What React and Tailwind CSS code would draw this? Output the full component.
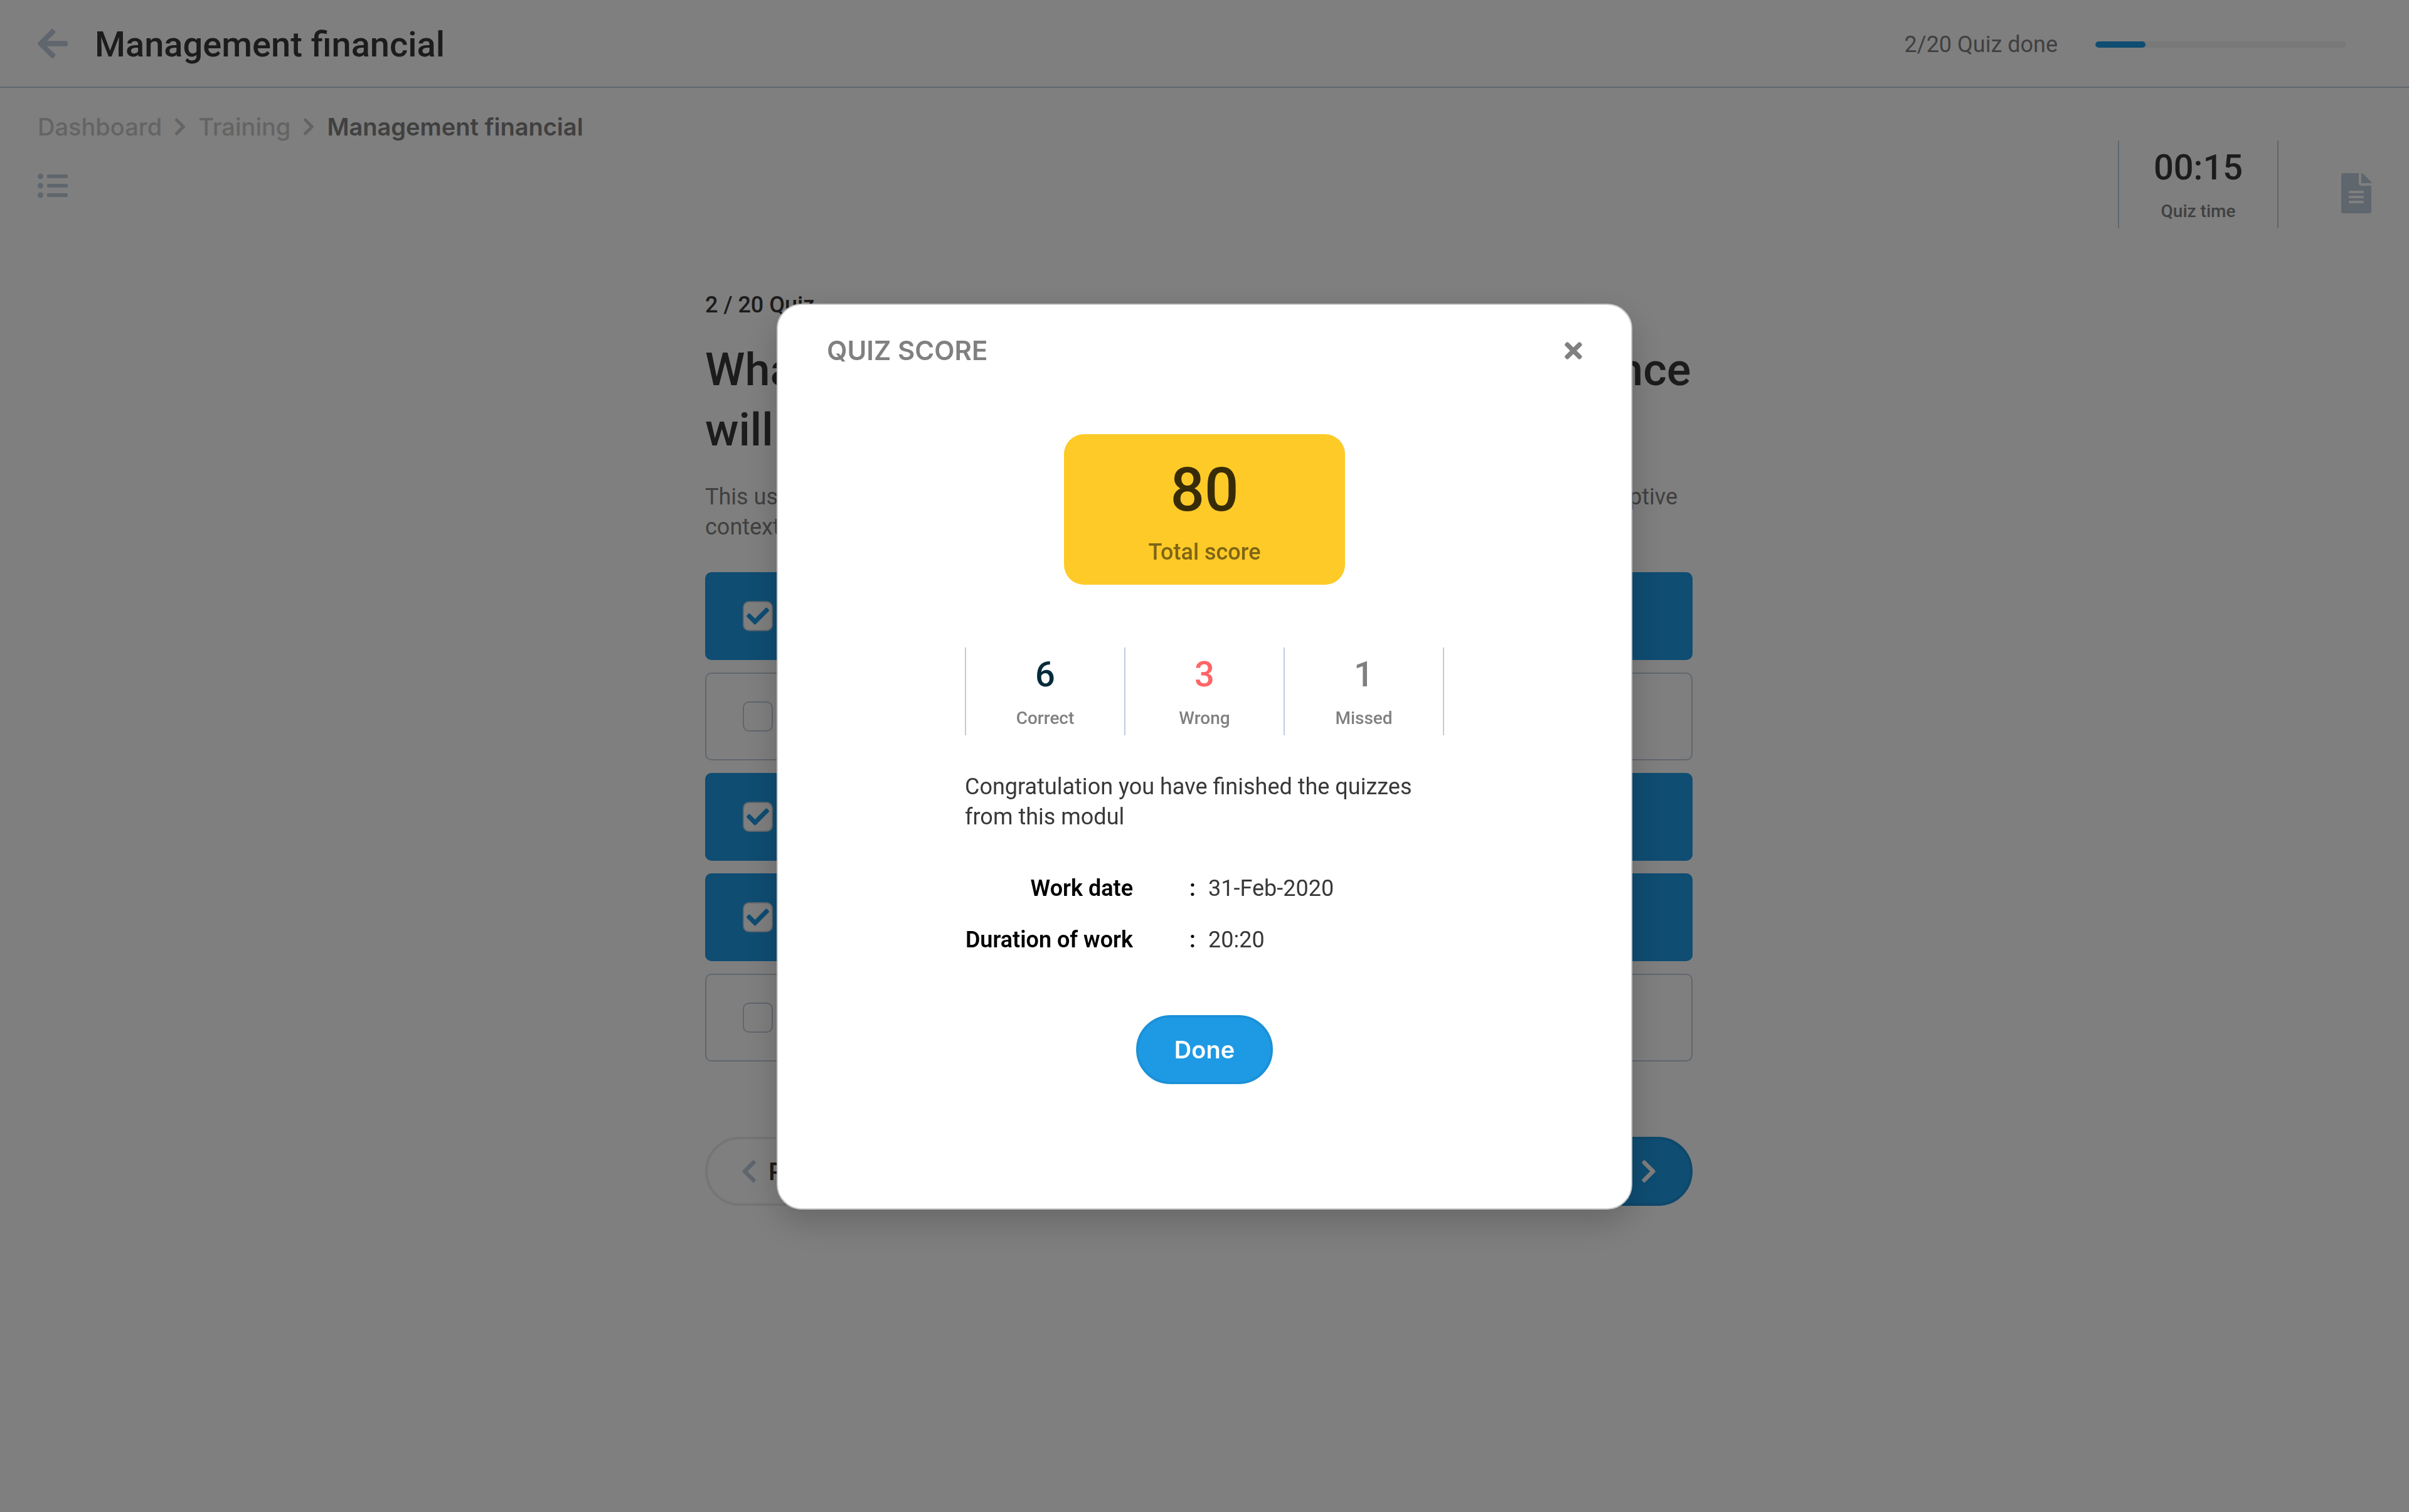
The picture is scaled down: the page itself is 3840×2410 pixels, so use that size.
import {
  FaArrowLeft,
  FaCheck,
  FaChevronLeft,
  FaChevronRight,
  FaFileAlt,
  FaListUl,
  FaTimes,
} from "react-icons/fa";

const options = [
  { id: "a", label: "Monthly cash flow report", checked: true },
  { id: "b", label: "Annual budget plan", checked: false },
  { id: "c", label: "Investment portfolio", checked: true },
  { id: "d", label: "Operational expenses", checked: true },
  { id: "e", label: "None of the above", checked: false },
];

const results = [
  { label: "Correct", value: 6, color: "text-[#062b3a]" },
  { label: "Wrong", value: 3, color: "text-[#ff6565]" },
  { label: "Missed", value: 1, color: "text-[#808080]" },
];

const details = [
  { term: "Work date", value: "31-Feb-2020" },
  { term: "Duration of work", value: "20:20" },
];

function Header() {
  return (
    <header className="flex h-[140px] items-center justify-between border-b-2 border-[#c0ccda] pr-[100px] pl-[60px]">
      <div className="flex items-center gap-[43px]">
        <button type="button" aria-label="Back" className="text-[#c0ccda]">
          <FaArrowLeft className="h-[55px] w-12" />
        </button>
        <h1 className="pt-1 text-[56px] leading-[64px] font-medium text-[#383838]">
          Management financial
        </h1>
      </div>
      <div className="flex items-center gap-[60px] pt-1">
        <span className="text-[36px] leading-[48px] text-[#808080]">2/20 Quiz done</span>
        <div
          role="progressbar"
          aria-label="Quiz progress"
          aria-valuemin={0}
          aria-valuemax={20}
          aria-valuenow={2}
          className="h-[10px] w-[400px] overflow-hidden rounded-[5px] bg-[#f0f0f0]"
        >
          <div className="h-full w-1/5 rounded-[5px] bg-[#1e9ae5]" />
        </div>
      </div>
    </header>
  );
}

function Breadcrumb() {
  return (
    <nav aria-label="Breadcrumb">
      <ol className="flex items-center gap-[19px] font-['Inter',sans-serif] text-[38px] leading-[48px] font-medium text-[#c8c8c8]">
        <li>
          <a href="#dashboard">Dashboard</a>
        </li>
        <li aria-hidden="true">
          <FaChevronRight className="h-8 w-5" />
        </li>
        <li>
          <a href="#training">Training</a>
        </li>
        <li aria-hidden="true">
          <FaChevronRight className="h-8 w-5" />
        </li>
        <li aria-current="page" className="font-semibold text-[#808080]">
          Management financial
        </li>
      </ol>
    </nav>
  );
}

function Stat({ value, label, color }) {
  return (
    <div className="flex h-[140px] flex-1 flex-col items-center pt-[11px]">
      <span className={`text-[56px] leading-[64px] font-medium ${color}`}>{value}</span>
      <span className="mt-[22px] text-[28px] leading-8 font-medium text-[#808080]">{label}</span>
    </div>
  );
}

function Toolbar() {
  return (
    <div className="flex items-start justify-between px-[60px]">
      <div className="flex flex-col items-start gap-[46px] pt-[38px]">
        <Breadcrumb />
        <button type="button" aria-label="Question list" className="text-[#c0ccda]">
          <FaListUl className="h-12 w-12" />
        </button>
      </div>
      <div className="flex items-start gap-[100px] pt-[84px]">
        <div className="flex w-[256px] border-x-2 border-[#c0ccda]">
          <Stat value="00:15" label="Quiz time" color="text-[#383838]" />
        </div>
        <button type="button" aria-label="Notes" className="pt-[52px] text-[#c0ccda]">
          <FaFileAlt className="h-16 w-12" />
        </button>
      </div>
    </div>
  );
}

function Option({ id, label, checked }) {
  return (
    <label
      htmlFor={id}
      className={`flex h-[140px] items-center gap-6 rounded-[10px] px-[58px] text-[36px] leading-[48px] ${
        checked
          ? "border-2 border-[#1e9ae5] bg-[#1e9ae5] text-white"
          : "border-2 border-[#c0ccda] bg-white text-[#383838]"
      }`}
    >
      <span className="grid place-items-center">
        <input
          id={id}
          type="checkbox"
          defaultChecked={checked}
          className="peer col-start-1 row-start-1 h-12 w-12 appearance-none rounded-[10px] border-2 border-[#c0ccda] bg-white"
        />
        <FaCheck className="pointer-events-none col-start-1 row-start-1 h-9 w-9 text-[#1e9ae5] opacity-0 peer-checked:opacity-100" />
      </span>
      {label}
    </label>
  );
}

function Question() {
  return (
    <main className="px-[60px] pt-[98px] pb-20">
      <div className="mx-auto flex max-w-[1592px] flex-col pr-[18px]">
        <p className="text-[36px] leading-[48px] font-medium text-[#383838]">2 / 20 Quiz</p>
        <h2 className="mt-8 text-[72px] leading-[96px] font-medium text-[#383838]">
          What is the best example of how the new finance
          <br />
          will be managed?
        </h2>
        <p className="mt-[34px] text-[36px] leading-[48px] text-[#808080]">
          This used to explain all of the financial words that are described in the longer and very descriptive
          <br />
          context
        </p>
        <div className="mt-12 flex flex-col gap-5">
          {options.map((option) => (
            <Option key={option.id} {...option} />
          ))}
        </div>
        <div className="mt-[120px] flex justify-between font-['Inter',sans-serif] text-[38px] leading-[48px] font-semibold">
          <button
            type="button"
            className="flex h-[110px] items-center gap-[18px] rounded-full border-4 border-[#ebebeb] px-[53px] text-[#383838]"
          >
            <FaChevronLeft className="h-[42px] w-[26px] text-[#c0ccda]" />
            Previous
          </button>
          <button
            type="button"
            className="flex h-[110px] items-center gap-[18px] rounded-full border-4 border-[#1b91d8] bg-[#1e9ae5] px-[53px] text-white"
          >
            Next
            <FaChevronRight className="h-[42px] w-[26px]" />
          </button>
        </div>
      </div>
    </main>
  );
}

function ScoreDialog() {
  return (
    <div className="fixed inset-0 grid place-items-center overflow-auto bg-black/50 pt-0.5">
      <section
        role="dialog"
        aria-modal="true"
        aria-labelledby="score-title"
        className="w-full max-w-[1364px] rounded-[40px] border-2 border-[#c8c8c8] bg-white px-[78px] pt-[49px] pb-[198px] shadow-[0_20px_56px_rgba(0,0,0,0.2)]"
      >
        <div className="flex items-center justify-between text-[#808080]">
          <h2
            id="score-title"
            className="font-['Inter',sans-serif] text-[42px] leading-[48px] font-semibold"
          >
            QUIZ SCORE
          </h2>
          <button type="button" aria-label="Close">
            <FaTimes className="h-10 w-7" />
          </button>
        </div>

        <div className="mx-auto mt-[109px] flex h-[240px] w-[448px] flex-col items-center rounded-[32px] bg-[#fdca28] pt-8">
          <span className="text-[96px] leading-[114px] font-medium text-black/78">80</span>
          <span className="mt-[18px] text-[36px] leading-[48px] font-medium text-black/50">
            Total score
          </span>
        </div>

        <div className="mx-auto mt-[100px] max-w-[764px]">
          <div className="flex divide-x-2 divide-[#c0ccda] border-x-2 border-[#c0ccda]">
            {results.map((result) => (
              <Stat key={result.label} {...result} />
            ))}
          </div>

          <p className="mt-[58px] text-[36px] leading-[48px] text-[#383838]">
            Congratulation you have finished the quizzes from this modul
          </p>

          <dl className="mt-[66px] flex flex-col gap-[34px] text-[36px] leading-[48px]">
            {details.map(({ term, value }) => (
              <div key={term} className="grid grid-cols-[268px_1fr] gap-x-[90px]">
                <dt className="text-right font-semibold text-black">{term}</dt>
                <dd className="flex text-[#383838]">
                  <span aria-hidden="true" className="w-[30px] font-semibold text-black">
                    :
                  </span>
                  {value}
                </dd>
              </div>
            ))}
          </dl>
        </div>

        <button
          type="button"
          className="mx-auto mt-24 flex h-[110px] items-center rounded-full border-4 border-[#1b91d8] bg-[#1e9ae5] px-[57px] font-['Inter',sans-serif] text-[38px] leading-[48px] font-semibold text-white"
        >
          Done
        </button>
      </section>
    </div>
  );
}

export default function App() {
  return (
    <div className="min-h-screen bg-white font-['Roboto',sans-serif]">
      <Header />
      <Toolbar />
      <Question />
      <ScoreDialog />
    </div>
  );
}
